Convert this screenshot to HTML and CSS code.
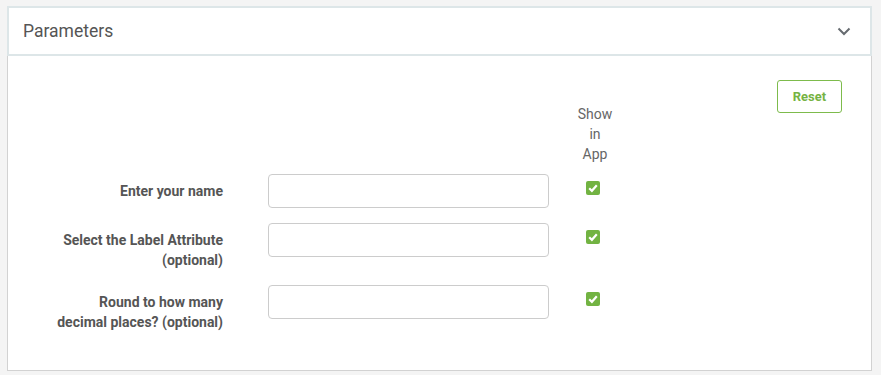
FILE: index.html
```html
<!DOCTYPE html>
<html lang="en">
<head>
    <meta charset="UTF-8">
    <meta name="viewport" content="width=device-width, initial-scale=1.0">
    <title>Parameters</title>
    <link rel="stylesheet" href="styles.css">
</head>
<body>
    <div class="painel">
        <div class="painel-topo">
            <span class="painel-titulo">Parameters</span>
            <svg class="seta" width="14" height="9" viewBox="0 0 14 9">
                <polyline points="1.5,1.5 7,7 12.5,1.5" fill="none" stroke="#666b70" stroke-width="2"/>
            </svg>
        </div>
        <div class="painel-corpo">
            <div class="grade cabecalho">
                <div></div>
                <div></div>
                <div class="mostrar">Show<br>in<br>App</div>
                <button class="reset">Reset</button>
            </div>
            <div class="grade linhas">
                <label class="rotulo" for="nome">Enter your name</label>
                <input type="text" id="nome" class="campo">
                <div class="marca"><span class="check"><svg width="14" height="14" viewBox="0 0 14 14"><polyline points="3.2,7.2 5.9,9.8 10.8,4.3" fill="none" stroke="#fff" stroke-width="2.2"/></svg></span></div>
                <div></div>

                <label class="rotulo" for="rotulo_attr">Select the Label Attribute (optional)</label>
                <input type="text" id="rotulo_attr" class="campo">
                <div class="marca"><span class="check"><svg width="14" height="14" viewBox="0 0 14 14"><polyline points="3.2,7.2 5.9,9.8 10.8,4.3" fill="none" stroke="#fff" stroke-width="2.2"/></svg></span></div>
                <div></div>

                <label class="rotulo" for="casas">Round to how many decimal places? (optional)</label>
                <input type="text" id="casas" class="campo">
                <div class="marca"><span class="check"><svg width="14" height="14" viewBox="0 0 14 14"><polyline points="3.2,7.2 5.9,9.8 10.8,4.3" fill="none" stroke="#fff" stroke-width="2.2"/></svg></span></div>
                <div></div>
            </div>
        </div>
    </div>
</body>
</html>
```

FILE: styles.css
```css
body {
    font-family: Roboto, "Liberation Sans", sans-serif;
    margin: 0;
    padding: 6px 9px 4px 7px;
    background-color: #f4f4f4;
    color: #555;
}
.painel {
    width: 865px;
}
.painel-topo {
    display: flex;
    align-items: center;
    justify-content: space-between;
    height: 46px;
    padding: 0 19px 0 14px;
    background-color: #fff;
    border: 2px solid #dde6e8;
}
.painel-titulo {
    font-size: 17.5px;
    color: #555;
}
.seta {
    display: block;
}
.painel-corpo {
    background-color: #fff;
    border: 1px solid #d2d2d2;
    border-top: none;
    padding: 24px 29px 38px 45px;
    height: 252px;
}
.grade {
    display: grid;
    grid-template-columns: 215px 281px 90px 1fr;
}
.cabecalho {
    margin-bottom: 10px;
}
.mostrar {
    padding-top: 24px;
    font-size: 14px;
    line-height: 20px;
    text-align: center;
    color: #666;
    padding-left: 2px;
}
.reset {
    justify-self: end;
    align-self: start;
    width: 65px;
    height: 33px;
    background-color: #fff;
    border: 1px solid #7dbb4c;
    border-radius: 3px;
    color: #76b343;
    font-family: Roboto, "Liberation Sans", sans-serif;
    font-size: 13px;
    font-weight: bold;
    cursor: pointer;
}
.linhas {
    row-gap: 15px;
}
.rotulo {
    padding: 7px 45px 0 0;
    text-align: right;
    font-size: 14px;
    font-weight: bold;
    line-height: 20px;
    color: #555;
}
.campo {
    width: 281px;
    height: 34px;
    box-sizing: border-box;
    border: 1px solid #ccc;
    border-radius: 4px;
    padding: 6px 10px;
}
.marca {
    display: flex;
    justify-content: center;
    padding-top: 7px;
    padding-right: 3px;
}
.check {
    display: block;
    width: 14px;
    height: 14px;
    border-radius: 2px;
    background-color: #72b342;
}
.check svg {
    display: block;
}
```
